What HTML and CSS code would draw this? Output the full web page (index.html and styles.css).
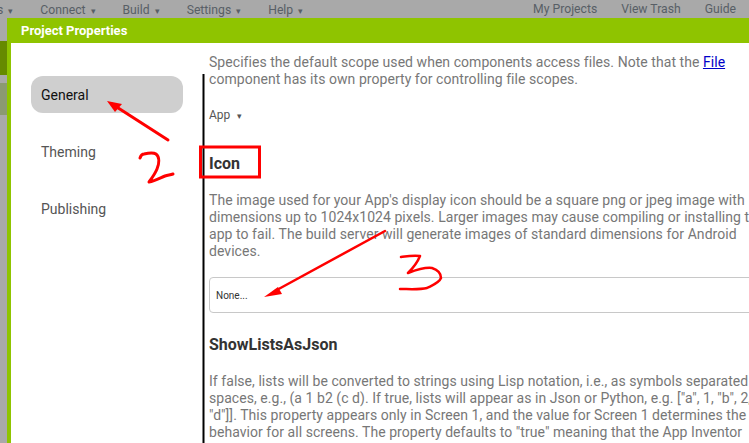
FILE: index.html
```html
<!DOCTYPE html>
<html lang="en">
<head>
<meta charset="utf-8">
<title>Project Properties</title>
<link rel="stylesheet" href="styles.css">
</head>
<body>
<header class="topbar">
  <nav class="menu menu-left">
    <span class="menu-item cut">s <i class="caret">▾</i></span>
    <span class="menu-item">Connect <i class="caret">▾</i></span>
    <span class="menu-item">Build <i class="caret">▾</i></span>
    <span class="menu-item">Settings <i class="caret">▾</i></span>
    <span class="menu-item">Help <i class="caret">▾</i></span>
  </nav>
  <nav class="menu menu-right">
    <span class="menu-item">My Projects</span>
    <span class="menu-item">View Trash</span>
    <span class="menu-item">Guide</span>
  </nav>
</header>
<div class="backdrop">
  <div class="bg-strip bg-dark"></div>
  <div class="bg-strip bg-light"></div>
</div>
<section class="dialog">
  <h1 class="dialog-title">Project Properties</h1>
  <div class="dialog-body">
    <aside class="sidebar">
      <div class="tab tab-active">General</div>
      <div class="tab">Theming</div>
      <div class="tab">Publishing</div>
    </aside>
    <main class="content">
      <p class="desc">Specifies the default scope used when components access files. Note that the <a class="link" href="#">File</a> component has its own property for controlling file scopes.</p>
      <div class="select">App <i class="caret">▾</i></div>
      <h2 class="prop">Icon</h2>
      <p class="desc">The image used for your App's display icon should be a square png or jpeg image with dimensions up to 1024x1024 pixels. Larger images may cause compiling or installing the app to fail. The build server will generate images of standard dimensions for Android devices.</p>
      <div class="file-box">None...</div>
      <h2 class="prop prop-json">ShowListsAsJson</h2>
      <p class="desc">If false, lists will be converted to strings using Lisp notation, i.e., as symbols separated by spaces, e.g., (a 1 b2 (c d). If true, lists will appear as in Json or Python, e.g. ["a", 1, "b", 2, ["c", "d"]]. This property appears only in Screen 1, and the value for Screen 1 determines the behavior for all screens. The property defaults to "true" meaning that the App Inventor programmer must explicitly set it to "false" if Lisp syntax is desired. In older versions of App Inventor,</p>
    </main>
  </div>
</section>
<svg class="marks" width="749" height="443" viewBox="0 0 749 443" aria-hidden="true">
  <path class="ink-black" d="M203.5 74V443"/>
  <path class="ink" d="M168 140L112 104"/>
  <path class="fill" d="M107 101L122 104L115 112Z"/>
  <path class="ink" d="M140 158C141 155 142 154 144 154C148 153 153 152 156 154C160 157 159 164 157 169C155 174 152 178 149 182C155 181 160 178 165 176C168 175 170 175 173 174"/>
  <rect class="ink" x="200.5" y="147" width="59" height="30"/>
  <path class="ink thin" d="M385 231L275 291"/>
  <path class="fill" d="M264 297L278 287L282 294Z"/>
  <path class="ink thin" d="M401 257C408 256 414 255 420 256C418 261 413 268 408 273C416 270 425 267 432 268C438 270 441 273 441 278C439 283 433 285 427 288C419 290 408 289 400 289"/>
</svg>
</body>
</html>
```
FILE: styles.css
```css
* { box-sizing: border-box; }
html, body { margin: 0; height: 100%; }
body {
  width: 749px;
  height: 443px;
  overflow: hidden;
  background: #a9a9a9;
  font-family: Roboto, "Liberation Sans", sans-serif;
  position: relative;
}
.topbar {
  height: 18px;
  display: flex;
  justify-content: space-between;
  background: #a9a9a9;
  color: #585f66;
  font-size: 12.2px;
  line-height: 18px;
  overflow: hidden;
}
.menu { display: flex; }
.menu-left { gap: 27px; margin-left: -3px; padding-top: 1px; }
.menu-right { gap: 24px; padding-right: 13px; }
.menu-item { white-space: nowrap; }
.caret {
  font-style: normal;
  font-size: 9px;
  margin-left: 2px;
}
.backdrop {
  position: absolute;
  left: 0;
  top: 18px;
  width: 7px;
  height: 425px;
  display: flex;
  flex-direction: column;
}
.bg-strip { flex: none; }
.bg-dark { margin-top: 23px; height: 34px; background: #668a00; }
.bg-light { margin-top: 8px; height: 32px; background: #8b9a72; }
.dialog {
  position: absolute;
  left: 7px;
  top: 18px;
  width: 742px;
  height: 425px;
  overflow: hidden;
  background: #fff;
  border-left: 4px solid #8fc400;
}
.dialog-title {
  margin: 0;
  height: 25px;
  padding-left: 10px;
  background: #8fc400;
  color: #fff;
  font-size: 13px;
  font-weight: 700;
  line-height: 25px;
}
.dialog-body { display: flex; }
.sidebar {
  width: 198px;
  flex: none;
  padding: 33px 0 0 20px;
}
.tab {
  width: 152px;
  height: 37px;
  margin-bottom: 20px;
  padding-left: 10px;
  border-radius: 12px;
  color: #555;
  font-size: 14px;
  line-height: 39px;
}
.tab-active { background: #cfcfcf; color: #111; }
.content {
  flex: none;
  width: 580px;
  padding-top: 11px;
}
.desc {
  margin: 0;
  width: 575px;
  color: #777;
  font-size: 14px;
  line-height: 17px;
  letter-spacing: 0.05px;
}
.link { color: #0000c8; }
.select {
  margin-top: 19px;
  color: #555;
  font-size: 12px;
  line-height: 17px;
}
.select .caret { margin-left: 4px; }
.prop {
  margin: 29px 0 19px;
  color: #333;
  font-size: 16px;
  font-weight: 700;
  line-height: 19px;
}
.prop-json { margin: 22px 0 19px; }
.file-box {
  margin-top: 17px;
  width: 560px;
  height: 36px;
  padding-left: 6px;
  border: 1px solid #c8c8c8;
  border-radius: 4px;
  color: #333;
  font-size: 10px;
  line-height: 36px;
}
.marks { position: absolute; left: 0; top: 0; pointer-events: none; }
.ink { fill: none; stroke: #f00; stroke-width: 3; stroke-linejoin: round; stroke-linecap: round; }
.thin { stroke-width: 2.5; }
rect.ink { stroke-linejoin: miter; }
.ink-black { fill: none; stroke: #000; stroke-width: 2; }
.fill { fill: #f00; stroke: none; }
```
